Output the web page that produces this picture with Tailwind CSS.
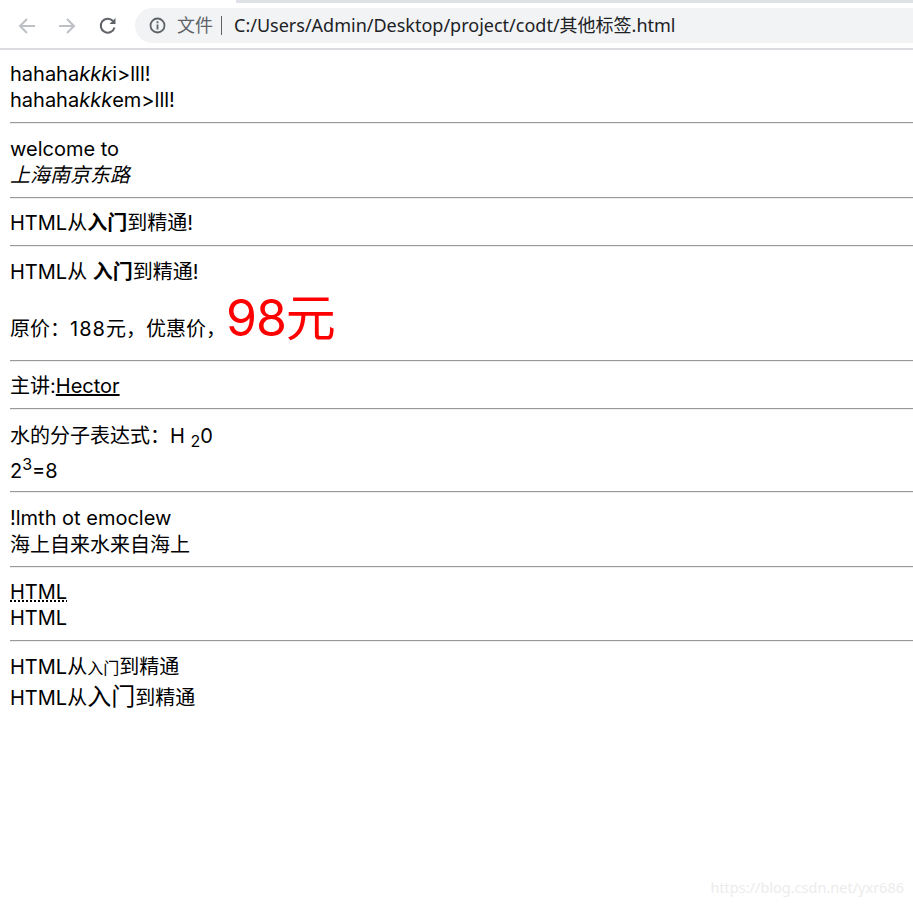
<!DOCTYPE html>
<html lang="en">
<head>
    <meta charset="UTF-8">
    <meta name="viewport" content="width=device-width, initial-scale=1.0">
    <title>其他标签</title>
    <script src="https://cdn.jsdelivr.net/npm/@tailwindcss/browser@4"></script>
</head>
<body class="relative h-screen overflow-hidden bg-white text-black font-['Inter','Noto_Sans_CJK_SC',sans-serif] text-[20px] leading-[26.4px]">
    <!-- browser toolbar -->
    <div class="h-[50px] border-b-2 border-[#dadce0] flex flex-col font-['Noto_Sans','Noto_Sans_CJK_SC',sans-serif]">
        <div class="h-[3px] flex">
            <div class="w-[236px] bg-white"></div>
            <div class="flex-1 bg-[#dee1e6]"></div>
        </div>
        <div class="flex items-center pl-[17px] pt-[5px]">
            <svg class="w-[20px] h-[20px]" viewBox="0 0 20 20" fill="none" stroke="#bdc1c6" stroke-width="2"><path d="M18 10H3M10 3l-7 7 7 7"/></svg>
            <svg class="w-[20px] h-[20px] ml-[20px]" viewBox="0 0 20 20" fill="none" stroke="#bdc1c6" stroke-width="2"><path d="M2 10h15M10 3l7 7-7 7"/></svg>
            <svg class="w-[20px] h-[20px] ml-[21px]" viewBox="0 0 20 20" fill="none" stroke="#5f6368" stroke-width="2"><path d="M16.5 11.5A7 7 0 1 1 15 5"/><path d="M17.5 2v6h-6" fill="#5f6368" stroke="none"/></svg>
            <div class="ml-[17px] flex-1 h-[35px] rounded-l-full bg-[#f1f3f4] flex items-center pl-[14px] text-[18px] leading-[24px]">
                <svg class="w-[17px] h-[17px]" viewBox="0 0 17 17" fill="none" stroke="#5f6368" stroke-width="1.8"><circle cx="8.5" cy="8.5" r="7"/><path d="M8.5 7.5v5M8.5 4.2v2"/></svg>
                <span class="ml-[11px] text-[#5f6368] -mt-[2px]">文件</span>
                <span class="ml-[8px] w-px h-[19px] bg-[#5f6368]"></span>
                <span class="ml-[12px] text-[#202124] -mt-[2px]">C:/Users/Admin/Desktop/project/codt/其他标签.html</span>
            </div>
        </div>
    </div>

    <!-- page content -->
    <div class="pl-[10px] pt-[11px]">
        <div>hahaha<em>kkk</em>i&gt;lll!</div>
        <div>hahaha<em>kkk</em>em&gt;lll!</div>
        <hr class="mt-[8px] mb-[12px] h-[2px] border-t border-b border-t-[#9a9a9a] border-b-[#eeeeee]">
        <div>welcome to</div>
        <div><em>上海南京东路</em></div>
        <hr class="mt-[8px] mb-[11px] h-[2px] border-t border-b border-t-[#9a9a9a] border-b-[#eeeeee]">
        <div>HTML从<strong>入门</strong>到精通!</div>
        <hr class="mt-[9px] mb-[12px] h-[2px] border-t border-b border-t-[#9a9a9a] border-b-[#eeeeee]">
        <div>HTML从 <strong>入门</strong>到精通!</div>
        <div class="h-[64.6px] leading-[66.6px]">原价：<span class="tracking-[1px]">188</span>元，优惠价，<span class="text-[50px] text-[#ff0000]"><span class="tracking-[-1px]">98</span>元</span></div>
        <hr class="mt-[10px] mb-[11px] h-[2px] border-t border-b border-t-[#9a9a9a] border-b-[#eeeeee]">
        <div>主讲:<u>Hector</u></div>
        <hr class="mt-[9px] mb-[12px] h-[2px] border-t border-b border-t-[#9a9a9a] border-b-[#eeeeee]">
        <div class="h-[29px] leading-[29px]">水的分子表达式：H <sub class="text-[16px]">2</sub>0</div>
        <div class="h-[32px] leading-[40px]">2<sup class="text-[16px]">3</sup>=8</div>
        <hr class="mt-[8px] mb-[12px] h-[2px] border-t border-b border-t-[#9a9a9a] border-b-[#eeeeee]">
        <div>!lmth ot emoclew</div>
        <div>海上自来水来自海上</div>
        <hr class="mt-[8px] mb-[11px] h-[2px] border-t border-b border-t-[#9a9a9a] border-b-[#eeeeee]">
        <div class="h-[26px]"><abbr class="underline decoration-dotted">HTML</abbr></div>
        <div class="h-[26px]">HTML</div>
        <hr class="mt-[9px] mb-[11px] h-[2px] border-t border-b border-t-[#9a9a9a] border-b-[#eeeeee]">
        <div class="h-[29px] leading-[29px]">HTML从<small class="text-[16px]">入门</small>到精通</div>
        <div class="h-[29px] leading-[29px]">HTML从<big class="text-[24px]">入门</big>到精通</div>
    </div>

    <!-- watermark -->
    <div class="absolute right-[9px] bottom-[8px] text-[14.5px] leading-[20px] text-[#ececec] font-['Noto_Sans',sans-serif]">https://blog.csdn.net/yxr686</div>
</body>
</html>
